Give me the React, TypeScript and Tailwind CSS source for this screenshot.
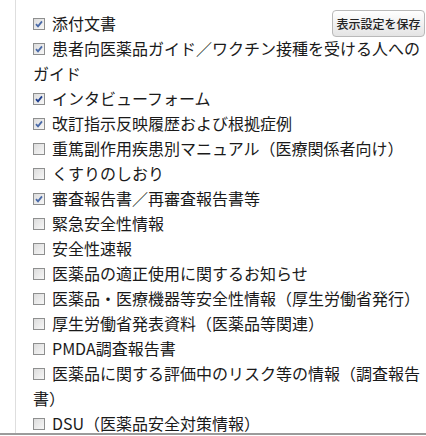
import { Fragment } from "react";

type DocOption = {
  label: string;
  checked: boolean;
  focused?: boolean;
};

const OPTIONS: DocOption[] = [
  { label: "添付文書", checked: true },
  { label: "患者向医薬品ガイド／ワクチン接種を受ける人へのガイド", checked: true },
  { label: "インタビューフォーム", checked: true, focused: true },
  { label: "改訂指示反映履歴および根拠症例", checked: true },
  { label: "重篤副作用疾患別マニュアル（医療関係者向け）", checked: false },
  { label: "くすりのしおり", checked: false },
  { label: "審査報告書／再審査報告書等", checked: true },
  { label: "緊急安全性情報", checked: false },
  { label: "安全性速報", checked: false },
  { label: "医薬品の適正使用に関するお知らせ", checked: false },
  { label: "医薬品・医療機器等安全性情報（厚生労働省発行）", checked: false },
  { label: "厚生労働省発表資料（医薬品等関連）", checked: false },
  { label: "PMDA調査報告書", checked: false },
  { label: "医薬品に関する評価中のリスク等の情報（調査報告書）", checked: false },
  { label: "DSU（医薬品安全対策情報）", checked: false },
];

function Box({ checked, focused }: { checked: boolean; focused?: boolean }) {
  return (
    <span className="relative top-[-2px] mr-[7px] inline-block h-[12px] w-[12px] align-middle border border-[#8e8f8f] bg-gradient-to-br from-[#dcdcdc] to-[#f7f7f7]">
      {checked && (
        <svg viewBox="0 0 10 10" className="absolute left-[0px] top-[0px] h-[10px] w-[10px]">
          <path
            d="M2 5.2 L4 7.4 L8 2.4"
            fill="none"
            stroke={focused ? "#1f3f8f" : "#4a6aa8"}
            strokeWidth="1.8"
          />
        </svg>
      )}
    </span>
  );
}

export default function App() {
  return (
    <div className="h-[436px] w-[426px] bg-white font-['Noto_Sans_CJK_JP',sans-serif] text-[#1a1a1a]">
      <div className="h-[435px] border-b-2 border-[#9b9b9b]">
        <div className="ml-[15px] h-full border-l border-[#dedede] pl-[17px] pr-[1px] pt-[11px]">
          {/* negative bottom margin keeps the button from narrowing the second row */}
          <button className="float-right mt-[-1px] mb-[-6px] h-[27px] w-[93px] rounded-[4px] border border-[#b9b9b9] bg-gradient-to-b from-white to-[#e4e4e4] text-[12px] font-medium leading-none text-[#222]">
            表示設定を保存
          </button>
          {OPTIONS.map((option) => (
            <Fragment key={option.label}>
              <div className="text-[16px] leading-[25px]">
                <Box checked={option.checked} focused={option.focused} />
                {option.label}
              </div>
            </Fragment>
          ))}
        </div>
      </div>
    </div>
  );
}
